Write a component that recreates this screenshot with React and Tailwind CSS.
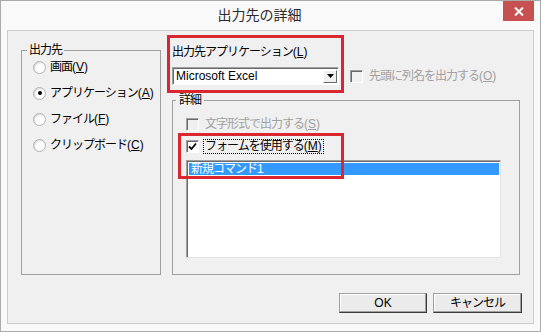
import React from 'react'

// label text with an accelerator key, e.g. 画面(V)
function Acc({ text, k }) {
  return (
    <>
      {text}
      <span className="tracking-normal">
        (<u>{k}</u>)
      </span>
    </>
  )
}

function Radio({ checked, children }) {
  return (
    <div className="flex h-[14px] items-center">
      <span className="flex h-[13px] w-[13px] items-center justify-center rounded-full border border-[#b0b0b0] bg-white shadow-[inset_1px_1px_1px_#d8d8d8]">
        {checked && <span className="h-[4px] w-[4px] rounded-full bg-black" />}
      </span>
      <span className="ml-[4px] leading-[14px]">{children}</span>
    </div>
  )
}

function CheckBox({ checked, disabled, focus, children }) {
  return (
    <div className="flex h-[14px] items-center">
      <span
        className={`flex h-[13px] w-[13px] items-center justify-center border border-t-[#a0a0a0] border-l-[#a0a0a0] border-b-white border-r-white shadow-[inset_1px_1px_0_#696969] ${
          disabled ? 'bg-[#f0f0f0]' : 'bg-white'
        }`}
      >
        {checked && (
          <svg width="9" height="9" viewBox="0 0 9 9">
            <path d="M1 4.5 L3.5 7 L8 1.5" fill="none" stroke="#000" strokeWidth="1.8" />
          </svg>
        )}
      </span>
      <span
        className={`ml-[4px] px-[1px] leading-[13px] ${disabled ? 'text-[#a0a0a0]' : 'text-black'} ${
          focus ? 'border border-dotted border-black' : 'border border-transparent'
        }`}
      >
        {children}
      </span>
    </div>
  )
}

export default function App() {
  return (
    <div className="relative flex h-[332px] w-[541px] flex-col border border-[#aaaaaa] bg-[#f9f9f9] font-['Liberation_Sans','Noto_Sans_CJK_JP',sans-serif] text-[12px] tracking-[-1px] text-black">
      {/* title bar */}
      <div className="flex h-[29px] items-start pr-[6px]">
        <div className="flex h-full flex-1 items-center justify-center pl-[15px] text-[14px] tracking-normal text-[#2b2b2b]">
          出力先の詳細
        </div>
        <div className="flex h-[20px] w-[31px] items-center justify-center bg-[#c75050]">
          <svg width="10" height="9" viewBox="0 0 10 9">
            <path d="M1 0.5 L9 8.5 M9 0.5 L1 8.5" stroke="#fff" strokeWidth="2" />
          </svg>
        </div>
      </div>

      {/* client area */}
      <div className="mx-[6px] flex h-[294px] flex-col border border-[#cdcdcd] bg-[#f0f0f0]">
        <div className="flex items-start">
          <fieldset className="ml-[13px] mt-[12px] h-[232px] w-[140px] border border-[#a0a0a0] pl-[5px]">
            <legend className="px-[2px] leading-[14px]">出力先</legend>
            <div className="ml-[6px] mt-[3px] flex flex-col gap-[12px]">
              <Radio>
                <Acc text="画面" k="V" />
              </Radio>
              <Radio checked>
                <Acc text="アプリケーション" k="A" />
              </Radio>
              <Radio>
                <Acc text="ファイル" k="F" />
              </Radio>
              <Radio>
                <Acc text="クリップボード" k="C" />
              </Radio>
            </div>
          </fieldset>

          <div className="ml-[11px] mt-[14px] flex flex-col">
            <div className="leading-[14px]">
              <Acc text="出力先アプリケーション" k="L" />
            </div>
            <div className="mt-[8px] flex items-center">
              <div className="flex h-[18px] w-[167px] items-center border border-t-[#a0a0a0] border-l-[#a0a0a0] border-b-white border-r-white bg-white shadow-[inset_1px_1px_0_#696969]">
                <span className="flex-1 pl-[3px] leading-[14px] tracking-normal">Microsoft Excel</span>
                <span className="mr-[1px] flex h-[13px] w-[14px] items-center justify-center border border-t-white border-l-white border-b-[#696969] border-r-[#696969] bg-[#f0f0f0]">
                  <svg width="7" height="4" viewBox="0 0 7 4">
                    <path d="M0 0 H7 L3.5 4 Z" fill="#000" />
                  </svg>
                </span>
              </div>
              <div className="ml-[11px]">
                <CheckBox disabled>
                  <Acc text="先頭に列名を出力する" k="O" />
                </CheckBox>
              </div>
            </div>

            <fieldset className="mt-[8px] h-[182px] w-[348px] border border-[#a0a0a0] pl-[3px]">
              <legend className="px-[3px] leading-[14px]">詳細</legend>
              <div className="ml-[10px] flex flex-col pt-[10px]">
                <CheckBox disabled>
                  <Acc text="文字形式で出力する" k="S" />
                </CheckBox>
                <div className="mt-[8px]">
                  <CheckBox checked focus>
                    <Acc text="フォームを使用する" k="M" />
                  </CheckBox>
                </div>
                <div className="mt-[7px] h-[98px] w-[315px] border border-t-[#a0a0a0] border-l-[#a0a0a0] border-b-[#e3e3e3] border-r-[#e3e3e3] bg-white p-[1px] shadow-[inset_1px_1px_0_#696969]">
                  <div className="ml-[1px] mt-[1px] h-[12px] bg-[#3399ff] pl-[2px] text-[12px] leading-[12px] text-white">
                    新規コマンド1
                  </div>
                </div>
              </div>
            </fieldset>
          </div>
        </div>

        <div className="mt-[18px] flex justify-end gap-[6px] pr-[11px]">
          <button className="h-[20px] w-[88px] border border-t-[#a0a0a0] border-l-[#a0a0a0] border-b-[#3c3c3c] border-r-[#3c3c3c] bg-[#ebebeb] leading-[14px] tracking-normal shadow-[inset_-1px_-1px_0_#a0a0a0,inset_1px_1px_0_#ffffff]">
            OK
          </button>
          <button className="h-[20px] w-[89px] border border-t-[#a0a0a0] border-l-[#a0a0a0] border-b-[#3c3c3c] border-r-[#3c3c3c] bg-[#ebebeb] leading-[14px] shadow-[inset_-1px_-1px_0_#a0a0a0,inset_1px_1px_0_#ffffff]">
            キャンセル
          </button>
        </div>
      </div>

      {/* red annotation boxes */}
      <div className="pointer-events-none absolute left-[166px] top-[34px] h-[58px] w-[177px] border-[3px] border-[#d9262f]" />
      <div className="pointer-events-none absolute left-[177px] top-[132px] h-[46px] w-[166px] border-[3px] border-[#d9262f]" />
    </div>
  )
}
